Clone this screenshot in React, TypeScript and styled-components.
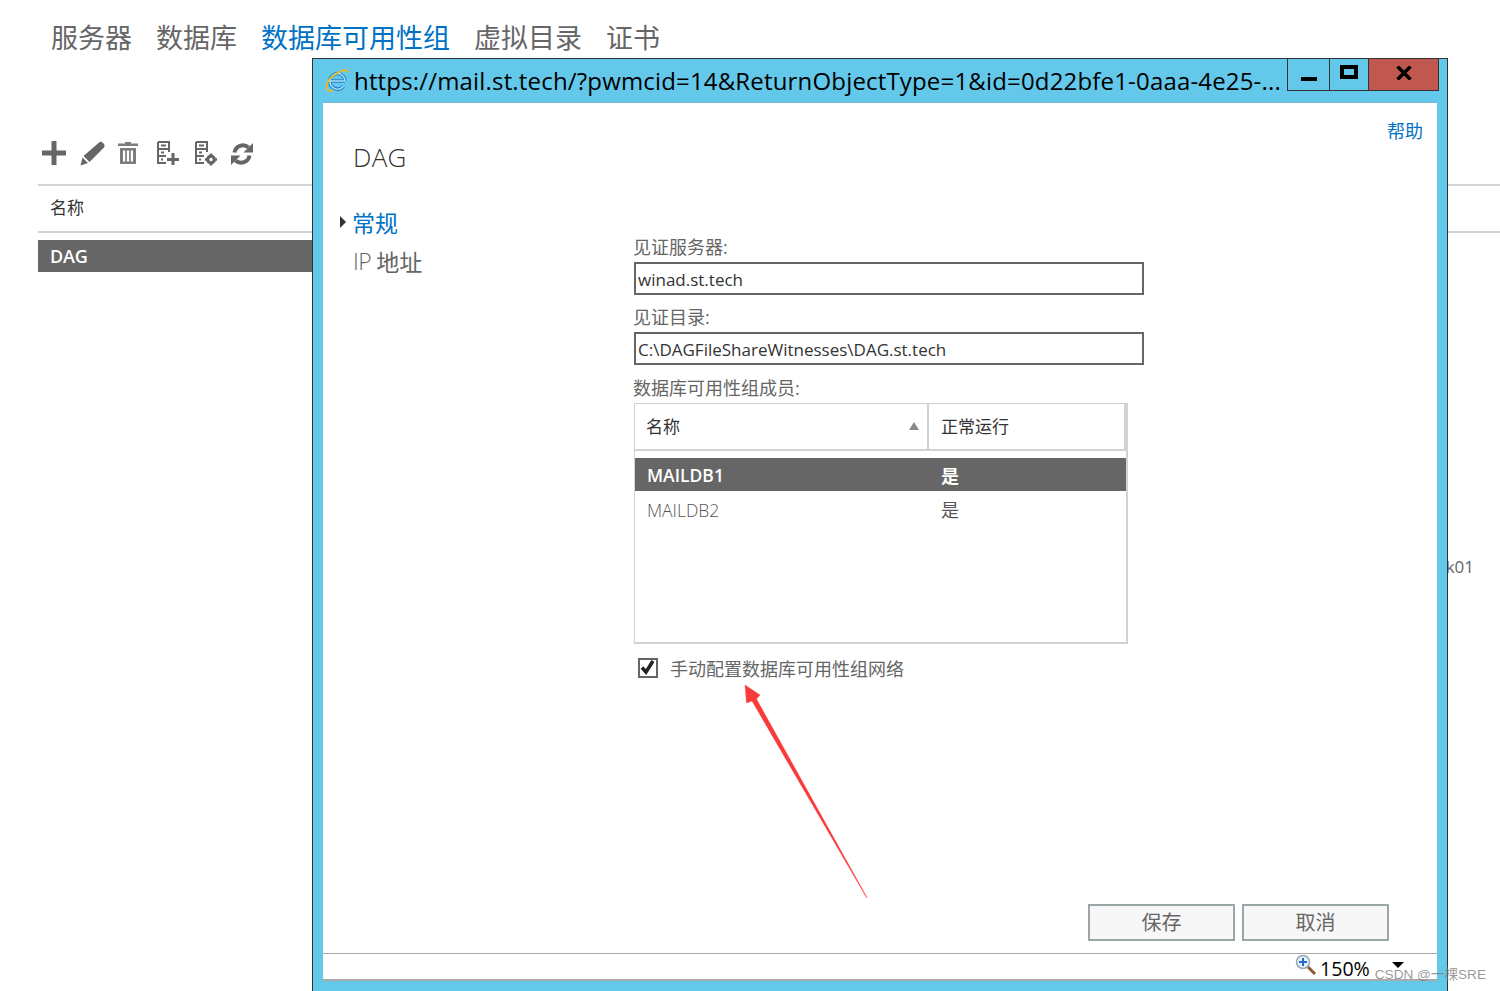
import React from 'react';
import styled, { createGlobalStyle } from 'styled-components';

const GlobalStyle = createGlobalStyle`
  html, body {
    margin: 0;
    padding: 0;
    background: #fff;
    overflow: hidden;
  }
  body {
    font-family: "Open Sans", "Noto Sans CJK SC", sans-serif;
  }
`;

const Page = styled.div`
  position: relative;
  width: 1500px;
  height: 991px;
  overflow: hidden;
  background: #fff;
`;

const TopNav = styled.nav`
  display: flex;
  gap: 24px;
  padding: 17px 0 0 51px;
  height: 42px;
`;

const TopNavItem = styled.a<{ $active?: boolean }>`
  font-size: 27px;
  line-height: 42px;
  font-weight: 400;
  color: ${(p) => (p.$active ? '#0072c6' : '#666')};
`;

const Toolbar = styled.div`
  display: flex;
  height: 34px;
  margin: 82px 0 0 42px;
`;

const ToolButton = styled.span<{ $width: number }>`
  display: block;
  width: ${(p) => p.$width}px;
  height: 26px;
  color: #666;
  svg {
    display: block;
    filter: blur(0.4px);
  }
`;

const ListHeader = styled.div`
  margin: 9px 0 0 38px;
  height: 45px;
  border-top: 2px solid #cfd4d7;
  border-bottom: 2px solid #cfd4d7;
  padding-left: 12px;
  font-size: 17px;
  line-height: 43px;
  color: #333;
`;

const ListRow = styled.div`
  margin: 7px 0 0 38px;
  width: 600px;
  height: 32px;
  background: #666;
  padding-left: 12px;
  box-sizing: border-box;
  color: #fff;
  font-size: 18px;
  font-weight: 600;
  letter-spacing: -0.2px;
  line-height: 33px;
`;

const HiddenCell = styled.div`
  margin-top: 283px;
  padding-right: 26px;
  text-align: right;
  font-size: 17px;
  line-height: 24px;
  color: #666;
`;

const PopupWindow = styled.div`
  position: absolute;
  left: 312px;
  top: 58px;
  width: 1136px;
  height: 933px;
  box-sizing: border-box;
  display: flex;
  flex-direction: column;
  background: #64c8ea;
  border: 1px solid #333;
  border-bottom: none;
  padding-bottom: 10px;
`;

const TitleBar = styled.div`
  display: flex;
  align-items: flex-start;
  height: 44px;
  flex: none;
  padding: 0 8px 0 12px;
`;

const TitleIcon = styled.svg`
  flex: none;
  margin: 9px 5px 0 0;
`;

const TitleText = styled.div`
  font-family: "Open Sans", sans-serif;
  font-size: 24px;
  letter-spacing: 0.17px;
  line-height: 43px;
  color: #000;
  white-space: nowrap;
  flex: 1;
  min-width: 0;
`;

const WindowControls = styled.div`
  display: flex;
  flex: none;
  height: 32px;
  border-bottom: 1px solid #333;
  box-sizing: border-box;
`;

const ControlButton = styled.div<{ $width: number; $close?: boolean }>`
  width: ${(p) => p.$width}px;
  box-sizing: border-box;
  display: flex;
  align-items: center;
  justify-content: center;
  border-left: 1px solid #333;
  border-right: ${(p) => (p.$close ? '1px solid #333' : 'none')};
  background: ${(p) => (p.$close ? '#c0584f' : 'transparent')};
`;

const MinimizeGlyph = styled.span`
  display: block;
  width: 16px;
  height: 4px;
  margin-top: 8px;
  background: #000;
`;

const MaximizeGlyph = styled.span`
  display: block;
  width: 18px;
  height: 14px;
  margin-top: -5px;
  box-sizing: border-box;
  border: 4px solid #000;
`;

const CloseGlyph = styled.svg`
  margin-top: -4px;
`;

const Sheet = styled.div`
  flex: 1;
  min-height: 0;
  display: flex;
  flex-direction: column;
  margin: 0 10px;
  background: #fff;
  box-shadow: 0 -1px 0 #7fb4cf;
`;

const Main = styled.div`
  flex: 1;
  min-height: 0;
  display: flex;
  flex-direction: column;
`;

const HelpRow = styled.div`
  display: flex;
  justify-content: flex-end;
  padding: 16px 14px 0 0;
  height: 24px;
  flex: none;
`;

const HelpLink = styled.a`
  font-size: 18px;
  line-height: 24px;
  color: #0072c6;
`;

const DialogTitle = styled.h1`
  margin: -2px 0 1px 30px;
  font-size: 26px;
  letter-spacing: 0.3px;
  line-height: 32px;
  font-weight: 300;
  color: #333;
  flex: none;
`;

const Columns = styled.div`
  display: flex;
  flex: 1;
  min-height: 0;
`;

const SideNav = styled.div`
  width: 310px;
  flex: none;
  box-sizing: border-box;
  padding: 30px 0 0 17px;
  display: flex;
  flex-direction: column;
  gap: 3px;
`;

const SideNavItem = styled.a<{ $active?: boolean }>`
  display: flex;
  align-items: center;
  height: 36px;
  padding-left: ${(p) => (p.$active ? 0 : 13)}px;
  font-size: 23px;
  font-weight: 400;
  color: ${(p) => (p.$active ? '#0072c6' : '#666')};
`;

const LightWord = styled.span`
  font-weight: 300;
  margin-right: 5px;
  letter-spacing: -0.5px;
`;

const ActiveMarker = styled.span`
  width: 0;
  height: 0;
  margin: 0 6px 0 0;
  border-left: 6px solid #333;
  border-top: 6px solid transparent;
  border-bottom: 6px solid transparent;
`;

const Form = styled.div`
  padding-top: 61px;
  display: flex;
  flex-direction: column;
  align-items: flex-start;
`;

const FieldLabel = styled.label<{ $gap: number }>`
  margin-top: ${(p) => p.$gap}px;
  font-size: 18px;
  line-height: 24px;
  font-weight: 400;
  color: #666;
`;

const FieldValue = styled.div`
  margin: 3px 0 0 1px;
  width: 510px;
  height: 33px;
  box-sizing: border-box;
  border: 2px solid #666;
  padding-left: 2px;
  font-size: 17px;
  line-height: 31px;
  color: #333;
`;

const MemberTable = styled.div`
  margin: 3px 0 0 1px;
  width: 494px;
  height: 241px;
  box-sizing: border-box;
  border: 1px solid #cdd3d6;
  border-width: 1px 2px 2px 1px;
`;

const MemberHead = styled.div`
  display: flex;
  height: 47px;
  box-sizing: border-box;
  border-bottom: 2px solid #cdd3d6;
  margin-bottom: 7px;
  font-size: 17px;
  color: #333;
`;

const HeadCell = styled.div<{ $width: number }>`
  width: ${(p) => p.$width}px;
  box-sizing: border-box;
  display: flex;
  align-items: center;
  justify-content: space-between;
  padding: 0 8px 2px 11px;
  border-right: 2px solid #cdd3d6;
  &:last-child {
    padding-left: 12px;
  }
`;

const SortArrow = styled.span`
  width: 0;
  height: 0;
  border-left: 5px solid transparent;
  border-right: 5px solid transparent;
  border-bottom: 8px solid #888;
`;

const MemberRow = styled.div<{ $selected?: boolean }>`
  display: flex;
  height: ${(p) => (p.$selected ? 33 : 38)}px;
  align-items: center;
  font-size: 17.5px;
  font-weight: ${(p) => (p.$selected ? 600 : 300)};
  color: ${(p) => (p.$selected ? '#fff' : '#555')};
  background: ${(p) => (p.$selected ? '#666' : 'transparent')};
`;

const NameCell = styled.div`
  width: 306px;
  padding-left: 12px;
  box-sizing: border-box;
`;

const StateCell = styled.div<{ $selected?: boolean }>`
  font-size: 18px;
  font-weight: ${(p) => (p.$selected ? 700 : 400)};
  margin-top: ${(p) => (p.$selected ? 0 : -2)}px;
`;

const CheckRow = styled.div`
  display: flex;
  align-items: center;
  margin: 14px 0 0 5px;
  height: 20px;
`;

const CheckBox = styled.span`
  width: 20px;
  height: 20px;
  box-sizing: border-box;
  border: 2.5px solid #666;
  flex: none;
  margin-right: 12px;
  svg {
    display: block;
  }
`;

const CheckText = styled.span`
  font-size: 18px;
  font-weight: 400;
  color: #666;
`;

const ActionBar = styled.div`
  display: flex;
  justify-content: flex-end;
  gap: 7px;
  padding: 0 48px 12px 0;
  flex: none;
`;

const ActionButton = styled.button`
  width: 147px;
  height: 37px;
  box-sizing: border-box;
  border: 2px solid #9ba6a9;
  background: #f7f7f7;
  color: #666;
  font-family: inherit;
  font-size: 20px;
  font-weight: 400;
  padding: 0 0 2px;
`;

const StatusBar = styled.div`
  height: 28px;
  flex: none;
  box-sizing: border-box;
  border-top: 1px solid #aaa;
  border-bottom: 2px solid #aaa;
  display: flex;
  align-items: center;
  justify-content: flex-end;
  padding-right: 33px;
`;

const ZoomIcon = styled.svg`
  margin: -3px 3px 0 0;
`;

const ZoomValue = styled.span`
  font-size: 19.6px;
  color: #000;
  width: 72px;
  line-height: 26px;
  margin-top: 4px;
`;

const ZoomCaret = styled.span`
  width: 0;
  height: 0;
  margin-top: -4px;
  border-left: 6px solid transparent;
  border-right: 6px solid transparent;
  border-top: 6px solid #000;
`;

const ArrowMark = styled.svg`
  position: absolute;
  left: 740px;
  top: 680px;
  pointer-events: none;
`;

const Watermark = styled.div`
  position: absolute;
  right: 14px;
  top: 965px;
  font-family: "Liberation Sans", "Noto Sans CJK SC", sans-serif;
  font-size: 13.6px;
  line-height: 20px;
  color: rgba(120, 120, 120, 0.75);
`;

function ToolIcon({ width, children }: { width: number; children: React.ReactNode }) {
  return (
    <ToolButton $width={width}>
      <svg width="26" height="26" viewBox="0 0 26 26" fill="currentColor">
        {children}
      </svg>
    </ToolButton>
  );
}

function ServerBody() {
  return (
    <g fill="none" stroke="currentColor" strokeWidth="2">
      <path d="M1 1h11v10M1 1v21h8" />
      <path d="M1 8h11M1 15h8M4 4.500h5M4 11.500h3M4 18.500h2" />
    </g>
  );
}

export default function App() {
  return (
    <Page>
      <GlobalStyle />
      <TopNav>
        <TopNavItem>服务器</TopNavItem>
        <TopNavItem>数据库</TopNavItem>
        <TopNavItem $active>数据库可用性组</TopNavItem>
        <TopNavItem>虚拟目录</TopNavItem>
        <TopNavItem>证书</TopNavItem>
      </TopNav>

      <Toolbar>
        <ToolIcon width={38}>
          <path d="M9.500 0h5v9.500H24v5h-9.500V24h-5v-9.500H0v-5h9.500z" />
        </ToolIcon>
        <ToolIcon width={38}>
          <path d="M18.500 2c1.500-1.500 3-1.500 4 -.5l1.500 1.500c1 1.500 .5 3-.5 4L9.500 21 3.500 15zM2.500 16.500 8 22l-7.500 2.500z" />
        </ToolIcon>
        <ToolIcon width={39}>
          <path
            d="M7 2.500V1h6v1.500h7V5H0V2.500zM2 7h16v16H2zM5 9.500v11h2.200v-11zm3.900 0v11h2.200v-11zm3.900 0v11H15v-11z"
            fillRule="evenodd"
            fillOpacity="0.85"
          />
        </ToolIcon>
        <ToolIcon width={38}>
          <ServerBody />
          <path d="M14.500 12h3v5h4.500v3h-4.500v4h-3v-4H10v-3h4.500z" />
        </ToolIcon>
        <ToolIcon width={36}>
          <ServerBody />
          <circle cx="16" cy="18.500" r="3.300" fill="none" stroke="currentColor" strokeWidth="3.200" />
          <path d="M14.700 12.500h2.600v3h-2.600zM14.700 21.500h2.600v3h-2.600zM10 17.200h3v2.600h-3zM19 17.200h3v2.600h-3z" />
        </ToolIcon>
        <ToolIcon width={26}>
          <path d="M3.500 11.500A8.500 8.500 0 0 1 17.500 6.500" fill="none" stroke="currentColor" strokeWidth="4" />
          <path d="M22 2v9.500h-9.500z" />
          <path d="M18.500 14.500A8.500 8.500 0 0 1 4.500 19.500" fill="none" stroke="currentColor" strokeWidth="4" />
          <path d="M0 24v-9.500h9.500z" />
        </ToolIcon>
      </Toolbar>

      <ListHeader>名称</ListHeader>
      <ListRow>DAG</ListRow>
      <HiddenCell>k01</HiddenCell>

      <PopupWindow>
        <TitleBar>
          <TitleIcon width="24" height="24" viewBox="0 0 24 24">
            <path d="M20 13H5A7.500 7.500 0 1 1 20 13M5 13A7.500 7.500 0 0 0 18.500 18" fill="none" stroke="#1f83cf" strokeWidth="3.600" />
            <path d="M20 13H5A7.500 7.500 0 1 1 20 13M5 13A7.500 7.500 0 0 0 18.500 18" fill="none" stroke="#a8e2f8" strokeWidth="1.400" />
            <path d="M2 21C0 15 6 7 18 2.500c3-1 5-.5 5 2" fill="none" stroke="#f0b91e" strokeWidth="1.800" />
            <path d="M2 21c.5 2.500 3 2.500 6 1" fill="none" stroke="#f0b91e" strokeWidth="1.800" />
          </TitleIcon>
          <TitleText>https://mail.st.tech/?pwmcid=14&amp;ReturnObjectType=1&amp;id=0d22bfe1-0aaa-4e25-...</TitleText>
          <WindowControls>
            <ControlButton $width={42}>
              <MinimizeGlyph />
            </ControlButton>
            <ControlButton $width={39}>
              <MaximizeGlyph />
            </ControlButton>
            <ControlButton $width={71} $close>
              <CloseGlyph width="16" height="14" viewBox="0 0 16 14">
                <path d="M1.500 0.500 14.500 13.500M14.500 0.500 1.500 13.500" stroke="#000" strokeWidth="3.500" />
              </CloseGlyph>
            </ControlButton>
          </WindowControls>
        </TitleBar>

        <Sheet>
          <Main>
            <HelpRow>
              <HelpLink>帮助</HelpLink>
            </HelpRow>
            <DialogTitle>DAG</DialogTitle>
            <Columns>
              <SideNav>
                <SideNavItem $active>
                  <ActiveMarker />
                  常规
                </SideNavItem>
                <SideNavItem>
                  <LightWord>IP</LightWord>
                  地址
                </SideNavItem>
              </SideNav>
              <Form>
                <FieldLabel $gap={0}>见证服务器:</FieldLabel>
                <FieldValue>winad.st.tech</FieldValue>
                <FieldLabel $gap={10}>见证目录:</FieldLabel>
                <FieldValue>C:\DAGFileShareWitnesses\DAG.st.tech</FieldValue>
                <FieldLabel $gap={11}>数据库可用性组成员:</FieldLabel>
                <MemberTable>
                  <MemberHead>
                    <HeadCell $width={294}>
                      名称
                      <SortArrow />
                    </HeadCell>
                    <HeadCell $width={197}>正常运行</HeadCell>
                  </MemberHead>
                  <MemberRow $selected>
                    <NameCell>MAILDB1</NameCell>
                    <StateCell $selected>是</StateCell>
                  </MemberRow>
                  <MemberRow>
                    <NameCell>MAILDB2</NameCell>
                    <StateCell>是</StateCell>
                  </MemberRow>
                </MemberTable>
                <CheckRow>
                  <CheckBox>
                    <svg width="15" height="15" viewBox="0 0 15 15">
                      <path d="M2 7.500 6 12 13 1" fill="none" stroke="#222" strokeWidth="3.500" />
                    </svg>
                  </CheckBox>
                  <CheckText>手动配置数据库可用性组网络</CheckText>
                </CheckRow>
              </Form>
            </Columns>
            <ActionBar>
              <ActionButton>保存</ActionButton>
              <ActionButton>取消</ActionButton>
            </ActionBar>
          </Main>
          <StatusBar>
            <ZoomIcon width="22" height="22" viewBox="0 0 22 22">
              <path d="M12 12l8 8" stroke="#8a5a2c" strokeWidth="3" />
              <circle cx="8" cy="8" r="6.500" fill="#e6eff7" stroke="#9aa8b4" strokeWidth="1.500" />
              <path d="M8 4v8M4 8h8" stroke="#1a6fd0" strokeWidth="2" />
            </ZoomIcon>
            <ZoomValue>150%</ZoomValue>
            <ZoomCaret />
          </StatusBar>
        </Sheet>
      </PopupWindow>

      <ArrowMark width="132" height="222" viewBox="0 0 132 222">
        <path d="M5 5 20 15 16.500 19 127 217.500 126.500 217.500 12 21 6.500 23z" fill="#f93a3a" stroke="#f93a3a" strokeWidth="0.400" />
      </ArrowMark>
      <Watermark>CSDN @一棵SRE</Watermark>
    </Page>
  );
}
